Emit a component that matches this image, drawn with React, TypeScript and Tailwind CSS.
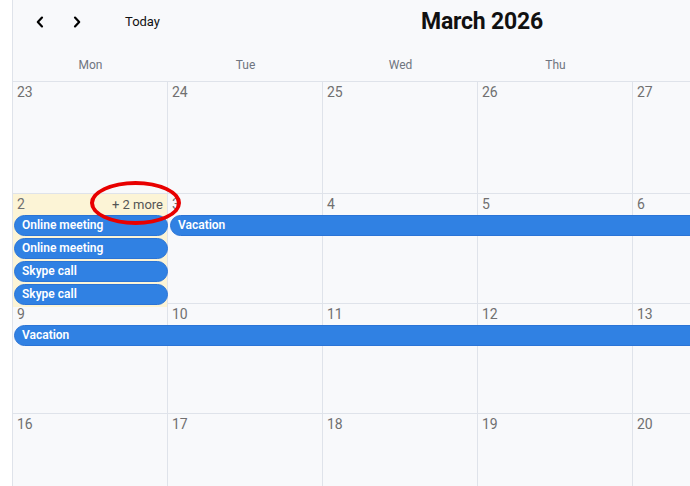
type CalEvent = { title: string; col: string; row: string };
type Week = { days: number[]; highlight?: number; more?: string; events?: CalEvent[] };

const COL_START = ["col-start-1", "col-start-2", "col-start-3", "col-start-4", "col-start-5", "col-start-6", "col-start-7"];

const WEEKDAYS = ["Mon", "Tue", "Wed", "Thu", "Fri", "Sat", "Sun"];

const WEEKS: Week[] = [
  { days: [23, 24, 25, 26, 27, 28, 1] },
  {
    days: [2, 3, 4, 5, 6, 7, 8],
    highlight: 0,
    more: "+ 2 more",
    events: [
      { title: "Online meeting", col: "col-start-1 col-span-1 ml-[1px]", row: "row-start-2" },
      { title: "Online meeting", col: "col-start-1 col-span-1 ml-[1px]", row: "row-start-3" },
      { title: "Skype call", col: "col-start-1 col-span-1 ml-[1px]", row: "row-start-4" },
      { title: "Skype call", col: "col-start-1 col-span-1 ml-[1px]", row: "row-start-5" },
      { title: "Vacation", col: "col-start-2 col-span-6 ml-[2px]", row: "row-start-2" },
    ],
  },
  {
    days: [9, 10, 11, 12, 13, 14, 15],
    events: [{ title: "Vacation", col: "col-start-1 col-span-7 ml-[1px]", row: "row-start-2" }],
  },
  { days: [16, 17, 18, 19, 20, 21, 22] },
];

function Chevron({ dir }: { dir: "left" | "right" }) {
  return (
    <svg width="10" height="12" viewBox="0 0 10 12" fill="none" stroke="currentColor" strokeWidth="2.2" strokeLinecap="round" strokeLinejoin="round">
      {dir === "left" ? <path d="M7 1.6 2.8 6 7 10.4" /> : <path d="M3 1.6 7.2 6 3 10.4" />}
    </svg>
  );
}

function EventPill({ ev }: { ev: CalEvent }) {
  return (
    <div
      className={`${ev.col} ${ev.row} h-[21px] truncate rounded-full border border-[#2b74d6] bg-[#3081e3] pl-[7px] text-[12px] font-semibold leading-[19px] text-white`}
    >
      {ev.title}
    </div>
  );
}

function WeekRow({ week, first }: { week: Week; first: boolean }) {
  return (
    <div
      className={`grid grid-cols-[repeat(7,155px)] grid-rows-[21px_repeat(4,23px)_1fr] border-t border-[#dfe3ea] ${
        first ? "h-[112px]" : "h-[110px]"
      }`}
    >
      {week.days.map((d, i) => (
        <div
          key={d}
          className={`${COL_START[i]} row-span-full border-r border-[#dfe3ea] ${
            week.highlight === i ? "bg-[#fcf4d6]" : ""
          }`}
        >
          <div className="flex h-[20px] items-center justify-between px-[4px] text-[14px] leading-[19px] text-[#707070]">
            <span>{d}</span>
            {week.highlight === i && week.more && <span className="text-[13px] text-[#555]">{week.more}</span>}
          </div>
        </div>
      ))}
      {week.events?.map((ev, i) => (
        <EventPill key={i} ev={ev} />
      ))}
    </div>
  );
}

export default function App() {
  return (
    <div className="relative h-[486px] w-[690px] overflow-hidden bg-white font-['Roboto',sans-serif]">
      <div className="ml-[12px] w-[1086px] border-l border-[#dfe3ea] bg-[#f8f9fb]">
        {/* toolbar */}
        <div className="flex h-[43px] items-center">
          <button type="button" className="ml-[22px] flex h-6 w-[10px] items-center justify-center text-black">
            <Chevron dir="left" />
          </button>
          <button type="button" className="ml-[27px] flex h-6 w-[10px] items-center justify-center text-black">
            <Chevron dir="right" />
          </button>
          <span className="ml-[43px] pt-[1px] text-[13px] text-[#111]">Today</span>
          <h1 className="ml-[261px] pt-[2px] text-[23px] font-bold tracking-[-0.2px] text-[#111]">March 2026</h1>
        </div>

        {/* weekday header */}
        <div className="grid h-[38px] grid-cols-[repeat(7,155px)] items-center pt-[6px]">
          {WEEKDAYS.map((w) => (
            <div key={w} className="text-center text-[12px] text-[#6f7580]">
              {w}
            </div>
          ))}
        </div>

        {WEEKS.map((week, i) => (
          <WeekRow key={i} week={week} first={i === 0} />
        ))}
      </div>

      {/* annotation */}
      <div className="pointer-events-none absolute left-[90px] top-[181px] h-[44px] w-[91px] rounded-[50%] border-[4px] border-[#e80000]" />
    </div>
  );
}
